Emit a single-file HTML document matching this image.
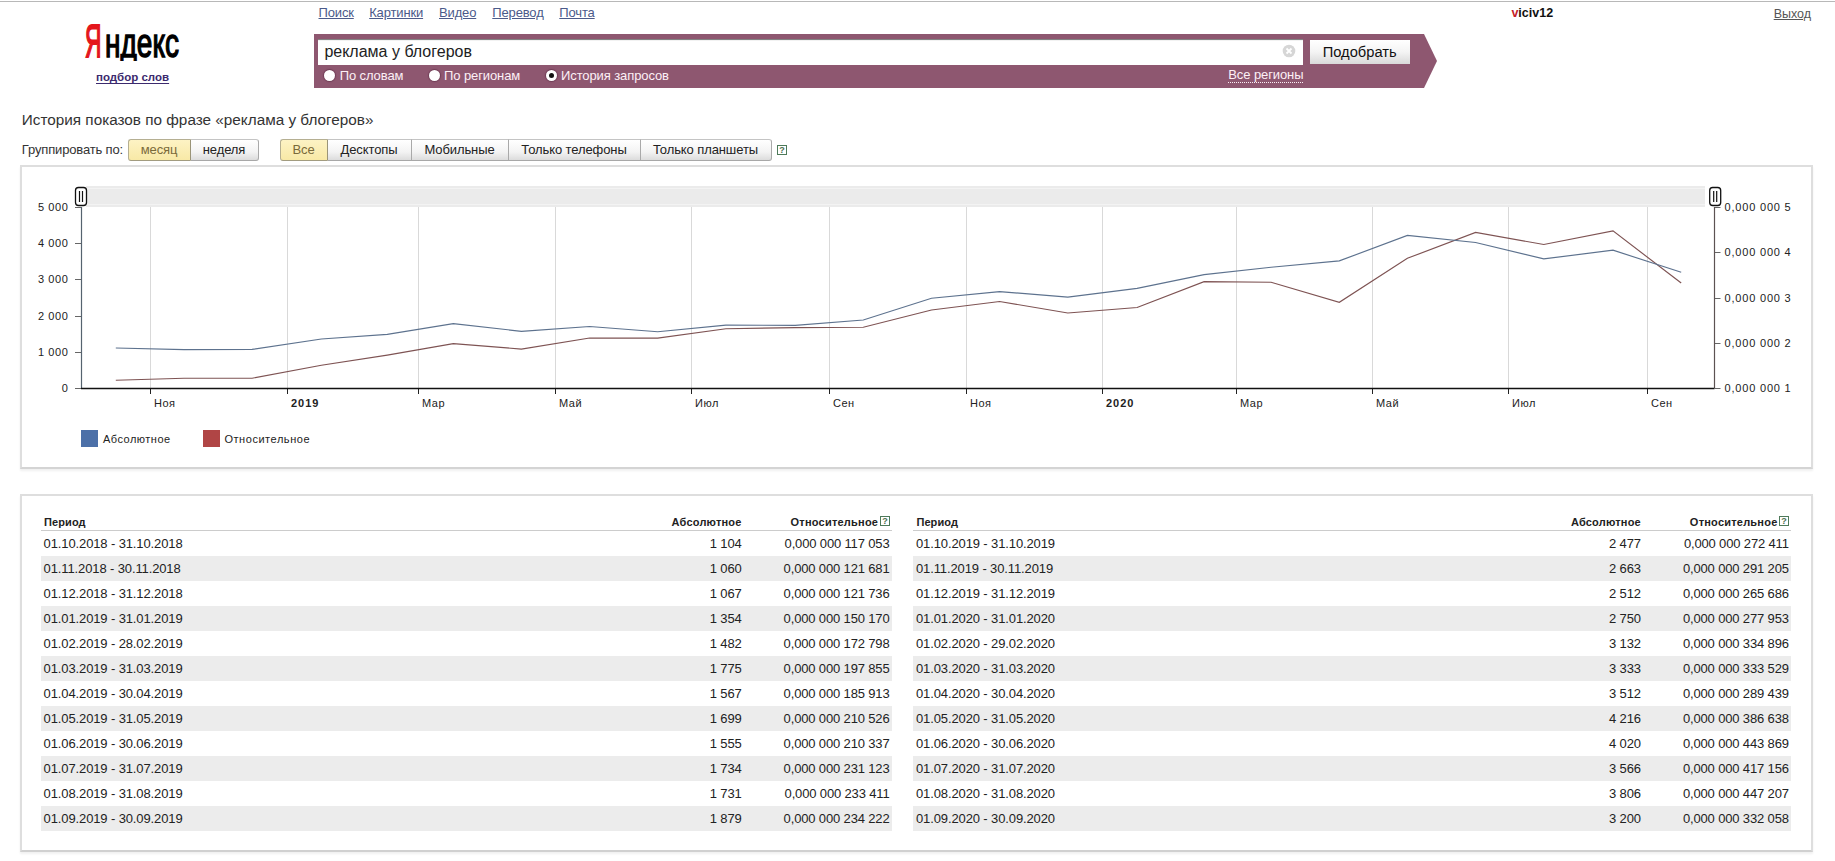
<!DOCTYPE html>
<html><head><meta charset="utf-8"><title>Wordstat</title>
<style>
html,body{margin:0;padding:0;background:#fff;width:1835px;height:861px;overflow:hidden;position:relative}
body{font-family:"Liberation Sans", sans-serif}
.t{position:absolute;white-space:nowrap;font-family:"Liberation Sans", sans-serif}
</style></head><body>
<div style="position:absolute;left:0;top:1px;width:1835px;height:1px;background:#b8b8b8"></div>
<svg style="position:absolute;left:0px;top:0px" width="200" height="70"><defs><clipPath id="lc"><rect x="0" y="0" width="200" height="61"/></clipPath></defs><text x="85" y="57" font-family="Liberation Sans" font-size="46" fill="#e4161c" stroke="#e4161c" stroke-width="1.9" textLength="16.5" lengthAdjust="spacingAndGlyphs">Я</text><text x="105" y="57" clip-path="url(#lc)" font-family="Liberation Sans" font-size="40" fill="#000" stroke="#000" stroke-width="1.4" textLength="74" lengthAdjust="spacingAndGlyphs">ндекс</text></svg>
<div class="t " style="left:96.00px;top:72.27px;font-size:11.5px;line-height:11.5px;color:#3c2a6e;font-weight:700;letter-spacing:0px;text-decoration:underline;text-underline-offset:2px;text-decoration-thickness:1.3px;">подбор слов</div>
<div class="t " style="left:318.50px;top:6.00px;font-size:13px;line-height:13px;color:#4b5a8a;font-weight:400;letter-spacing:-0.15px;text-decoration:underline;">Поиск</div>
<div class="t " style="left:369.20px;top:6.00px;font-size:13px;line-height:13px;color:#4b5a8a;font-weight:400;letter-spacing:-0.15px;text-decoration:underline;">Картинки</div>
<div class="t " style="left:439.00px;top:6.00px;font-size:13px;line-height:13px;color:#4b5a8a;font-weight:400;letter-spacing:-0.15px;text-decoration:underline;">Видео</div>
<div class="t " style="left:492.30px;top:6.00px;font-size:13px;line-height:13px;color:#4b5a8a;font-weight:400;letter-spacing:-0.15px;text-decoration:underline;">Перевод</div>
<div class="t " style="left:559.30px;top:6.00px;font-size:13px;line-height:13px;color:#4b5a8a;font-weight:400;letter-spacing:-0.15px;text-decoration:underline;">Почта</div>
<div class="t " style="left:1511.40px;top:6.62px;font-size:12.5px;line-height:12.5px;color:#111;font-weight:700;letter-spacing:0px;"><span style="color:#c4202a">v</span>iciv12</div>
<div class="t " style="left:1773.70px;top:7.62px;font-size:12.5px;line-height:12.5px;color:#555;font-weight:400;letter-spacing:0px;text-decoration:underline;">Выход</div>
<svg style="position:absolute;left:0;top:0" width="1835" height="100"><polygon points="314,34 1424,34 1437,61 1424,88 314,88" fill="#8e5770"/></svg>
<div style="position:absolute;left:318px;top:39px;width:985px;height:26px;background:#fff;box-shadow:inset 0 2px 1px -1px #777"></div>
<div class="t " style="left:324.40px;top:43.76px;font-size:16px;line-height:16px;color:#222;font-weight:400;letter-spacing:0px;">реклама у блогеров</div>
<svg style="position:absolute;left:1282px;top:44px" width="14" height="14"><circle cx="7" cy="7" r="6.3" fill="#d6d6d6"/><path d="M4.5 4.5 L9.5 9.5 M9.5 4.5 L4.5 9.5" stroke="#fff" stroke-width="1.8"/></svg>
<div style="position:absolute;left:1310px;top:40px;width:100px;height:24px;background:linear-gradient(#ffffff,#f4f4f4 50%,#d9d9d9);"></div>
<div class="t " style="left:1322.70px;top:44.96px;font-size:14.7px;line-height:14.7px;color:#111;font-weight:400;letter-spacing:0px;">Подобрать</div>
<div style="position:absolute;left:323.5px;top:69.5px;width:11px;height:11px;border-radius:50%;background:#fff;box-shadow:0 0 1px 1px rgba(90,40,65,0.55)"></div>
<div class="t " style="left:339.70px;top:68.50px;font-size:13px;line-height:13px;color:#fdf0f6;font-weight:400;letter-spacing:-0.1px;">По словам</div>
<div style="position:absolute;left:428.5px;top:69.5px;width:11px;height:11px;border-radius:50%;background:#fff;box-shadow:0 0 1px 1px rgba(90,40,65,0.55)"></div>
<div class="t " style="left:444.00px;top:68.50px;font-size:13px;line-height:13px;color:#fdf0f6;font-weight:400;letter-spacing:-0.1px;">По регионам</div>
<div style="position:absolute;left:545.5px;top:69.5px;width:11px;height:11px;border-radius:50%;background:#fff;box-shadow:0 0 1px 1px rgba(90,40,65,0.55)"></div>
<div style="position:absolute;left:548.5px;top:72.5px;width:5px;height:5px;border-radius:50%;background:#111"></div>
<div class="t " style="left:561.00px;top:68.50px;font-size:13px;line-height:13px;color:#fdf0f6;font-weight:400;letter-spacing:-0.1px;">История запросов</div>
<div class="t " style="left:1228.30px;top:67.60px;font-size:13px;line-height:13px;color:#fdf0f6;font-weight:400;letter-spacing:-0.1px;border-bottom:1px dotted #fdf0f6;line-height:14px;">Все регионы</div>
<div class="t " style="left:21.80px;top:111.95px;font-size:15.3px;line-height:15.3px;color:#333;font-weight:400;letter-spacing:0px;">История показов по фразе «реклама у блогеров»</div>
<div class="t " style="left:21.80px;top:142.60px;font-size:13px;line-height:13px;color:#333;font-weight:400;letter-spacing:-0.15px;">Группировать по:</div>
<div style="position:absolute;left:128px;top:139px;width:63px;height:22px;box-sizing:border-box;border:1px solid #b5af92;border-bottom-color:#a29c80;border-right-color:#9a9478;background:linear-gradient(#fdf3c4,#f8e9a6);border-radius:3px 0 0 3px;"></div>
<div class="t" style="left:128px;top:143.00px;width:62px;text-align:center;font-size:13px;line-height:13px;color:#7a6a3a;letter-spacing:-0.1px">месяц</div>
<div style="position:absolute;left:191px;top:139px;width:68px;height:22px;box-sizing:border-box;border:1px solid #c4c4c4;border-bottom-color:#a8a8a8;border-right-color:#a9a9a9;border-left:none;background:linear-gradient(#ffffff,#f3f3f3 60%,#dcdcdc);border-radius:0 3px 3px 0;"></div>
<div class="t" style="left:190px;top:143.00px;width:68px;text-align:center;font-size:13px;line-height:13px;color:#222;letter-spacing:-0.1px">неделя</div>
<div style="position:absolute;left:280px;top:139px;width:48px;height:22px;box-sizing:border-box;border:1px solid #b5af92;border-bottom-color:#a29c80;border-right-color:#9a9478;background:linear-gradient(#fdf3c4,#f8e9a6);border-radius:3px 0 0 3px;"></div>
<div class="t" style="left:280px;top:143.00px;width:47px;text-align:center;font-size:13px;line-height:13px;color:#7a6a3a;letter-spacing:-0.1px">Все</div>
<div style="position:absolute;left:328px;top:139px;width:84px;height:22px;box-sizing:border-box;border:1px solid #c4c4c4;border-bottom-color:#a8a8a8;border-right-color:#a9a9a9;border-left:none;background:linear-gradient(#ffffff,#f3f3f3 60%,#dcdcdc);"></div>
<div class="t" style="left:327px;top:143.00px;width:84px;text-align:center;font-size:13px;line-height:13px;color:#222;letter-spacing:-0.1px">Десктопы</div>
<div style="position:absolute;left:412px;top:139px;width:97px;height:22px;box-sizing:border-box;border:1px solid #c4c4c4;border-bottom-color:#a8a8a8;border-right-color:#a9a9a9;border-left:none;background:linear-gradient(#ffffff,#f3f3f3 60%,#dcdcdc);"></div>
<div class="t" style="left:411px;top:143.00px;width:97px;text-align:center;font-size:13px;line-height:13px;color:#222;letter-spacing:-0.1px">Мобильные</div>
<div style="position:absolute;left:509px;top:139px;width:132px;height:22px;box-sizing:border-box;border:1px solid #c4c4c4;border-bottom-color:#a8a8a8;border-right-color:#a9a9a9;border-left:none;background:linear-gradient(#ffffff,#f3f3f3 60%,#dcdcdc);"></div>
<div class="t" style="left:508px;top:143.00px;width:132px;text-align:center;font-size:13px;line-height:13px;color:#222;letter-spacing:-0.1px">Только телефоны</div>
<div style="position:absolute;left:641px;top:139px;width:131px;height:22px;box-sizing:border-box;border:1px solid #c4c4c4;border-bottom-color:#a8a8a8;border-right-color:#a9a9a9;border-left:none;background:linear-gradient(#ffffff,#f3f3f3 60%,#dcdcdc);border-radius:0 3px 3px 0;"></div>
<div class="t" style="left:640px;top:143.00px;width:131px;text-align:center;font-size:13px;line-height:13px;color:#222;letter-spacing:-0.1px">Только планшеты</div>
<svg style="position:absolute;left:777px;top:145px" width="10" height="10"><rect x="0.5" y="0.5" width="9" height="9" fill="#fff" stroke="#4e7a5a" stroke-width="1"/><text x="5" y="8.3" text-anchor="middle" font-family="Liberation Sans" font-weight="700" font-size="9" fill="#4e7050">?</text></svg>
<div style="position:absolute;left:20px;top:165px;width:1793px;height:304px;box-sizing:border-box;border:2px solid #dedede;border-bottom-color:#d4d4d4;box-shadow:0 2px 2px #f0f0f0"></div>
<svg style="position:absolute;left:0;top:0" width="1835" height="861" shape-rendering="auto">
<rect x="86" y="186" width="1619" height="21" fill="#ebebeb"/>
<rect x="86" y="188" width="1619" height="1" fill="#f3f3f3"/>
<rect x="86" y="204" width="1619" height="1" fill="#f3f3f3"/>
<line x1="150.5" y1="207" x2="150.5" y2="388" stroke="#d9d9d9" stroke-width="1"/>
<line x1="150.5" y1="388" x2="150.5" y2="394" stroke="#222" stroke-width="1"/>
<line x1="287.5" y1="207" x2="287.5" y2="388" stroke="#d9d9d9" stroke-width="1"/>
<line x1="287.5" y1="388" x2="287.5" y2="394" stroke="#222" stroke-width="1"/>
<line x1="418.5" y1="207" x2="418.5" y2="388" stroke="#d9d9d9" stroke-width="1"/>
<line x1="418.5" y1="388" x2="418.5" y2="394" stroke="#222" stroke-width="1"/>
<line x1="555.5" y1="207" x2="555.5" y2="388" stroke="#d9d9d9" stroke-width="1"/>
<line x1="555.5" y1="388" x2="555.5" y2="394" stroke="#222" stroke-width="1"/>
<line x1="691.5" y1="207" x2="691.5" y2="388" stroke="#d9d9d9" stroke-width="1"/>
<line x1="691.5" y1="388" x2="691.5" y2="394" stroke="#222" stroke-width="1"/>
<line x1="829.5" y1="207" x2="829.5" y2="388" stroke="#d9d9d9" stroke-width="1"/>
<line x1="829.5" y1="388" x2="829.5" y2="394" stroke="#222" stroke-width="1"/>
<line x1="966.5" y1="207" x2="966.5" y2="388" stroke="#d9d9d9" stroke-width="1"/>
<line x1="966.5" y1="388" x2="966.5" y2="394" stroke="#222" stroke-width="1"/>
<line x1="1102.5" y1="207" x2="1102.5" y2="388" stroke="#d9d9d9" stroke-width="1"/>
<line x1="1102.5" y1="388" x2="1102.5" y2="394" stroke="#222" stroke-width="1"/>
<line x1="1236.5" y1="207" x2="1236.5" y2="388" stroke="#d9d9d9" stroke-width="1"/>
<line x1="1236.5" y1="388" x2="1236.5" y2="394" stroke="#222" stroke-width="1"/>
<line x1="1372.5" y1="207" x2="1372.5" y2="388" stroke="#d9d9d9" stroke-width="1"/>
<line x1="1372.5" y1="388" x2="1372.5" y2="394" stroke="#222" stroke-width="1"/>
<line x1="1508.5" y1="207" x2="1508.5" y2="388" stroke="#d9d9d9" stroke-width="1"/>
<line x1="1508.5" y1="388" x2="1508.5" y2="394" stroke="#222" stroke-width="1"/>
<line x1="1647.5" y1="207" x2="1647.5" y2="388" stroke="#d9d9d9" stroke-width="1"/>
<line x1="1647.5" y1="388" x2="1647.5" y2="394" stroke="#222" stroke-width="1"/>
<line x1="75" y1="388.5" x2="81" y2="388.5" stroke="#666" stroke-width="1"/>
<line x1="75" y1="352.5" x2="81" y2="352.5" stroke="#666" stroke-width="1"/>
<line x1="75" y1="316.5" x2="81" y2="316.5" stroke="#666" stroke-width="1"/>
<line x1="75" y1="279.5" x2="81" y2="279.5" stroke="#666" stroke-width="1"/>
<line x1="75" y1="243.5" x2="81" y2="243.5" stroke="#666" stroke-width="1"/>
<line x1="75" y1="207.5" x2="81" y2="207.5" stroke="#666" stroke-width="1"/>
<line x1="1714.5" y1="388.5" x2="1720.5" y2="388.5" stroke="#666" stroke-width="1"/>
<line x1="1714.5" y1="343.5" x2="1720.5" y2="343.5" stroke="#666" stroke-width="1"/>
<line x1="1714.5" y1="298.5" x2="1720.5" y2="298.5" stroke="#666" stroke-width="1"/>
<line x1="1714.5" y1="252.5" x2="1720.5" y2="252.5" stroke="#666" stroke-width="1"/>
<line x1="1714.5" y1="207.5" x2="1720.5" y2="207.5" stroke="#666" stroke-width="1"/>
<line x1="81.5" y1="207" x2="81.5" y2="388" stroke="#56636f" stroke-width="1.2"/>
<line x1="1714.5" y1="207" x2="1714.5" y2="388" stroke="#5c5252" stroke-width="1.2"/>
<line x1="81" y1="388.5" x2="1714.5" y2="388.5" stroke="#111" stroke-width="1.6"/>
<polyline points="115.8,380.3 184.0,378.2 252.1,378.2 321.4,365.3 387.3,355.1 453.3,343.7 521.4,349.1 589.6,338.0 657.7,338.1 725.9,328.7 795.2,327.6 863.3,327.3 931.5,310.0 999.6,301.5 1067.8,313.0 1137.1,307.5 1204.1,281.7 1271.1,282.3 1339.3,302.3 1407.4,258.3 1475.6,232.4 1543.8,244.5 1613.0,230.9 1681.2,283.0" fill="none" stroke="#7e5353" stroke-width="1.15"/>
<polyline points="115.8,348.0 184.0,349.6 252.1,349.4 321.4,339.0 387.3,334.4 453.3,323.7 521.4,331.3 589.6,326.5 657.7,331.7 725.9,325.2 795.2,325.3 863.3,320.0 931.5,298.3 999.6,291.6 1067.8,297.1 1137.1,288.4 1204.1,274.6 1271.1,267.3 1339.3,260.9 1407.4,235.4 1475.6,242.5 1543.8,258.9 1613.0,250.2 1681.2,272.2" fill="none" stroke="#5d728e" stroke-width="1.15"/>
<rect x="75.5" y="187.5" width="11" height="18" rx="3" fill="#fff" stroke="#111" stroke-width="1.3"/>
<line x1="79.5" y1="191" x2="79.5" y2="202" stroke="#111" stroke-width="1.2"/>
<line x1="82.5" y1="191" x2="82.5" y2="202" stroke="#111" stroke-width="1.2"/>
<rect x="1709.7" y="187.5" width="11" height="18" rx="3" fill="#fff" stroke="#111" stroke-width="1.3"/>
<line x1="1713.7" y1="191" x2="1713.7" y2="202" stroke="#111" stroke-width="1.2"/>
<line x1="1716.7" y1="191" x2="1716.7" y2="202" stroke="#111" stroke-width="1.2"/>
<rect x="81" y="430" width="17" height="17" fill="#4c70a8"/>
<rect x="203" y="430" width="17" height="17" fill="#b04545"/>
</svg>
<div class="t " style="left:154.00px;top:397.69px;font-size:11px;line-height:11px;color:#222;font-weight:400;letter-spacing:0.5px;">Ноя</div>
<div class="t " style="left:291.00px;top:397.69px;font-size:11px;line-height:11px;color:#222;font-weight:700;letter-spacing:1.0px;">2019</div>
<div class="t " style="left:422.00px;top:397.69px;font-size:11px;line-height:11px;color:#222;font-weight:400;letter-spacing:0.5px;">Мар</div>
<div class="t " style="left:559.00px;top:397.69px;font-size:11px;line-height:11px;color:#222;font-weight:400;letter-spacing:0.5px;">Май</div>
<div class="t " style="left:695.00px;top:397.69px;font-size:11px;line-height:11px;color:#222;font-weight:400;letter-spacing:0.5px;">Июл</div>
<div class="t " style="left:833.00px;top:397.69px;font-size:11px;line-height:11px;color:#222;font-weight:400;letter-spacing:0.5px;">Сен</div>
<div class="t " style="left:970.00px;top:397.69px;font-size:11px;line-height:11px;color:#222;font-weight:400;letter-spacing:0.5px;">Ноя</div>
<div class="t " style="left:1106.00px;top:397.69px;font-size:11px;line-height:11px;color:#222;font-weight:700;letter-spacing:1.0px;">2020</div>
<div class="t " style="left:1240.00px;top:397.69px;font-size:11px;line-height:11px;color:#222;font-weight:400;letter-spacing:0.5px;">Мар</div>
<div class="t " style="left:1376.00px;top:397.69px;font-size:11px;line-height:11px;color:#222;font-weight:400;letter-spacing:0.5px;">Май</div>
<div class="t " style="left:1512.00px;top:397.69px;font-size:11px;line-height:11px;color:#222;font-weight:400;letter-spacing:0.5px;">Июл</div>
<div class="t " style="left:1651.00px;top:397.69px;font-size:11px;line-height:11px;color:#222;font-weight:400;letter-spacing:0.5px;">Сен</div>
<div class="t " style="right:1766.70px;top:382.69px;font-size:11px;line-height:11px;color:#222;font-weight:400;letter-spacing:0.55px;">0</div>
<div class="t " style="right:1766.70px;top:346.69px;font-size:11px;line-height:11px;color:#222;font-weight:400;letter-spacing:0.55px;">1 000</div>
<div class="t " style="right:1766.70px;top:310.69px;font-size:11px;line-height:11px;color:#222;font-weight:400;letter-spacing:0.55px;">2 000</div>
<div class="t " style="right:1766.70px;top:273.69px;font-size:11px;line-height:11px;color:#222;font-weight:400;letter-spacing:0.55px;">3 000</div>
<div class="t " style="right:1766.70px;top:237.69px;font-size:11px;line-height:11px;color:#222;font-weight:400;letter-spacing:0.55px;">4 000</div>
<div class="t " style="right:1766.70px;top:201.69px;font-size:11px;line-height:11px;color:#222;font-weight:400;letter-spacing:0.55px;">5 000</div>
<div class="t " style="left:1724.60px;top:382.69px;font-size:11px;line-height:11px;color:#222;font-weight:400;letter-spacing:0.8px;">0,000 000 1</div>
<div class="t " style="left:1724.60px;top:337.69px;font-size:11px;line-height:11px;color:#222;font-weight:400;letter-spacing:0.8px;">0,000 000 2</div>
<div class="t " style="left:1724.60px;top:292.69px;font-size:11px;line-height:11px;color:#222;font-weight:400;letter-spacing:0.8px;">0,000 000 3</div>
<div class="t " style="left:1724.60px;top:246.69px;font-size:11px;line-height:11px;color:#222;font-weight:400;letter-spacing:0.8px;">0,000 000 4</div>
<div class="t " style="left:1724.60px;top:201.69px;font-size:11px;line-height:11px;color:#222;font-weight:400;letter-spacing:0.8px;">0,000 000 5</div>
<div class="t " style="left:102.90px;top:434.09px;font-size:11px;line-height:11px;color:#222;font-weight:400;letter-spacing:0.5px;">Абсолютное</div>
<div class="t " style="left:224.40px;top:434.09px;font-size:11px;line-height:11px;color:#222;font-weight:400;letter-spacing:0.55px;">Относительное</div>
<div style="position:absolute;left:20px;top:494px;width:1793px;height:358px;box-sizing:border-box;border:2px solid #dedede;border-bottom-color:#d0d0d0;box-shadow:0 2px 2px #f0f0f0"></div>
<div class="t " style="left:44.00px;top:516.69px;font-size:11px;line-height:11px;color:#222;font-weight:700;letter-spacing:0.1px;">Период</div>
<div class="t " style="right:1093.40px;top:516.69px;font-size:11px;line-height:11px;color:#222;font-weight:700;letter-spacing:0.2px;">Абсолютное</div>
<div class="t " style="right:956.80px;top:516.69px;font-size:11px;line-height:11px;color:#222;font-weight:700;letter-spacing:0.22px;">Относительное</div>
<svg style="position:absolute;left:880.0px;top:516px" width="10" height="10"><rect x="0.5" y="0.5" width="9" height="9" fill="#fff" stroke="#4e7a5a" stroke-width="1"/><text x="5" y="8.3" text-anchor="middle" font-family="Liberation Sans" font-weight="700" font-size="9" fill="#4e7050">?</text></svg>
<div style="position:absolute;left:40.6px;top:530px;width:851.4px;height:1px;background:#cccccc"></div>
<div class="t " style="left:43.60px;top:537.00px;font-size:13px;line-height:13px;color:#222;font-weight:400;letter-spacing:-0.12px;">01.10.2018 - 31.10.2018</div>
<div class="t " style="right:1093.40px;top:537.00px;font-size:13px;line-height:13px;color:#222;font-weight:400;letter-spacing:-0.12px;">1 104</div>
<div class="t " style="right:945.50px;top:537.00px;font-size:13px;line-height:13px;color:#222;font-weight:400;letter-spacing:-0.15px;">0,000 000 117 053</div>
<div style="position:absolute;left:40.6px;top:556px;width:851.4px;height:25px;background:#ececec"></div>
<div class="t " style="left:43.60px;top:562.00px;font-size:13px;line-height:13px;color:#222;font-weight:400;letter-spacing:-0.12px;">01.11.2018 - 30.11.2018</div>
<div class="t " style="right:1093.40px;top:562.00px;font-size:13px;line-height:13px;color:#222;font-weight:400;letter-spacing:-0.12px;">1 060</div>
<div class="t " style="right:945.50px;top:562.00px;font-size:13px;line-height:13px;color:#222;font-weight:400;letter-spacing:-0.15px;">0,000 000 121 681</div>
<div class="t " style="left:43.60px;top:587.00px;font-size:13px;line-height:13px;color:#222;font-weight:400;letter-spacing:-0.12px;">01.12.2018 - 31.12.2018</div>
<div class="t " style="right:1093.40px;top:587.00px;font-size:13px;line-height:13px;color:#222;font-weight:400;letter-spacing:-0.12px;">1 067</div>
<div class="t " style="right:945.50px;top:587.00px;font-size:13px;line-height:13px;color:#222;font-weight:400;letter-spacing:-0.15px;">0,000 000 121 736</div>
<div style="position:absolute;left:40.6px;top:606px;width:851.4px;height:25px;background:#ececec"></div>
<div class="t " style="left:43.60px;top:612.00px;font-size:13px;line-height:13px;color:#222;font-weight:400;letter-spacing:-0.12px;">01.01.2019 - 31.01.2019</div>
<div class="t " style="right:1093.40px;top:612.00px;font-size:13px;line-height:13px;color:#222;font-weight:400;letter-spacing:-0.12px;">1 354</div>
<div class="t " style="right:945.50px;top:612.00px;font-size:13px;line-height:13px;color:#222;font-weight:400;letter-spacing:-0.15px;">0,000 000 150 170</div>
<div class="t " style="left:43.60px;top:637.00px;font-size:13px;line-height:13px;color:#222;font-weight:400;letter-spacing:-0.12px;">01.02.2019 - 28.02.2019</div>
<div class="t " style="right:1093.40px;top:637.00px;font-size:13px;line-height:13px;color:#222;font-weight:400;letter-spacing:-0.12px;">1 482</div>
<div class="t " style="right:945.50px;top:637.00px;font-size:13px;line-height:13px;color:#222;font-weight:400;letter-spacing:-0.15px;">0,000 000 172 798</div>
<div style="position:absolute;left:40.6px;top:656px;width:851.4px;height:25px;background:#ececec"></div>
<div class="t " style="left:43.60px;top:662.00px;font-size:13px;line-height:13px;color:#222;font-weight:400;letter-spacing:-0.12px;">01.03.2019 - 31.03.2019</div>
<div class="t " style="right:1093.40px;top:662.00px;font-size:13px;line-height:13px;color:#222;font-weight:400;letter-spacing:-0.12px;">1 775</div>
<div class="t " style="right:945.50px;top:662.00px;font-size:13px;line-height:13px;color:#222;font-weight:400;letter-spacing:-0.15px;">0,000 000 197 855</div>
<div class="t " style="left:43.60px;top:687.00px;font-size:13px;line-height:13px;color:#222;font-weight:400;letter-spacing:-0.12px;">01.04.2019 - 30.04.2019</div>
<div class="t " style="right:1093.40px;top:687.00px;font-size:13px;line-height:13px;color:#222;font-weight:400;letter-spacing:-0.12px;">1 567</div>
<div class="t " style="right:945.50px;top:687.00px;font-size:13px;line-height:13px;color:#222;font-weight:400;letter-spacing:-0.15px;">0,000 000 185 913</div>
<div style="position:absolute;left:40.6px;top:706px;width:851.4px;height:25px;background:#ececec"></div>
<div class="t " style="left:43.60px;top:712.00px;font-size:13px;line-height:13px;color:#222;font-weight:400;letter-spacing:-0.12px;">01.05.2019 - 31.05.2019</div>
<div class="t " style="right:1093.40px;top:712.00px;font-size:13px;line-height:13px;color:#222;font-weight:400;letter-spacing:-0.12px;">1 699</div>
<div class="t " style="right:945.50px;top:712.00px;font-size:13px;line-height:13px;color:#222;font-weight:400;letter-spacing:-0.15px;">0,000 000 210 526</div>
<div class="t " style="left:43.60px;top:737.00px;font-size:13px;line-height:13px;color:#222;font-weight:400;letter-spacing:-0.12px;">01.06.2019 - 30.06.2019</div>
<div class="t " style="right:1093.40px;top:737.00px;font-size:13px;line-height:13px;color:#222;font-weight:400;letter-spacing:-0.12px;">1 555</div>
<div class="t " style="right:945.50px;top:737.00px;font-size:13px;line-height:13px;color:#222;font-weight:400;letter-spacing:-0.15px;">0,000 000 210 337</div>
<div style="position:absolute;left:40.6px;top:756px;width:851.4px;height:25px;background:#ececec"></div>
<div class="t " style="left:43.60px;top:762.00px;font-size:13px;line-height:13px;color:#222;font-weight:400;letter-spacing:-0.12px;">01.07.2019 - 31.07.2019</div>
<div class="t " style="right:1093.40px;top:762.00px;font-size:13px;line-height:13px;color:#222;font-weight:400;letter-spacing:-0.12px;">1 734</div>
<div class="t " style="right:945.50px;top:762.00px;font-size:13px;line-height:13px;color:#222;font-weight:400;letter-spacing:-0.15px;">0,000 000 231 123</div>
<div class="t " style="left:43.60px;top:787.00px;font-size:13px;line-height:13px;color:#222;font-weight:400;letter-spacing:-0.12px;">01.08.2019 - 31.08.2019</div>
<div class="t " style="right:1093.40px;top:787.00px;font-size:13px;line-height:13px;color:#222;font-weight:400;letter-spacing:-0.12px;">1 731</div>
<div class="t " style="right:945.50px;top:787.00px;font-size:13px;line-height:13px;color:#222;font-weight:400;letter-spacing:-0.15px;">0,000 000 233 411</div>
<div style="position:absolute;left:40.6px;top:806px;width:851.4px;height:25px;background:#ececec"></div>
<div class="t " style="left:43.60px;top:812.00px;font-size:13px;line-height:13px;color:#222;font-weight:400;letter-spacing:-0.12px;">01.09.2019 - 30.09.2019</div>
<div class="t " style="right:1093.40px;top:812.00px;font-size:13px;line-height:13px;color:#222;font-weight:400;letter-spacing:-0.12px;">1 879</div>
<div class="t " style="right:945.50px;top:812.00px;font-size:13px;line-height:13px;color:#222;font-weight:400;letter-spacing:-0.15px;">0,000 000 234 222</div>
<div class="t " style="left:916.40px;top:516.69px;font-size:11px;line-height:11px;color:#222;font-weight:700;letter-spacing:0.1px;">Период</div>
<div class="t " style="right:194.10px;top:516.69px;font-size:11px;line-height:11px;color:#222;font-weight:700;letter-spacing:0.2px;">Абсолютное</div>
<div class="t " style="right:57.50px;top:516.69px;font-size:11px;line-height:11px;color:#222;font-weight:700;letter-spacing:0.22px;">Относительное</div>
<svg style="position:absolute;left:1779.3px;top:516px" width="10" height="10"><rect x="0.5" y="0.5" width="9" height="9" fill="#fff" stroke="#4e7a5a" stroke-width="1"/><text x="5" y="8.3" text-anchor="middle" font-family="Liberation Sans" font-weight="700" font-size="9" fill="#4e7050">?</text></svg>
<div style="position:absolute;left:913px;top:530px;width:878.3px;height:1px;background:#cccccc"></div>
<div class="t " style="left:916.00px;top:537.00px;font-size:13px;line-height:13px;color:#222;font-weight:400;letter-spacing:-0.12px;">01.10.2019 - 31.10.2019</div>
<div class="t " style="right:194.10px;top:537.00px;font-size:13px;line-height:13px;color:#222;font-weight:400;letter-spacing:-0.12px;">2 477</div>
<div class="t " style="right:46.20px;top:537.00px;font-size:13px;line-height:13px;color:#222;font-weight:400;letter-spacing:-0.15px;">0,000 000 272 411</div>
<div style="position:absolute;left:913px;top:556px;width:878.3px;height:25px;background:#ececec"></div>
<div class="t " style="left:916.00px;top:562.00px;font-size:13px;line-height:13px;color:#222;font-weight:400;letter-spacing:-0.12px;">01.11.2019 - 30.11.2019</div>
<div class="t " style="right:194.10px;top:562.00px;font-size:13px;line-height:13px;color:#222;font-weight:400;letter-spacing:-0.12px;">2 663</div>
<div class="t " style="right:46.20px;top:562.00px;font-size:13px;line-height:13px;color:#222;font-weight:400;letter-spacing:-0.15px;">0,000 000 291 205</div>
<div class="t " style="left:916.00px;top:587.00px;font-size:13px;line-height:13px;color:#222;font-weight:400;letter-spacing:-0.12px;">01.12.2019 - 31.12.2019</div>
<div class="t " style="right:194.10px;top:587.00px;font-size:13px;line-height:13px;color:#222;font-weight:400;letter-spacing:-0.12px;">2 512</div>
<div class="t " style="right:46.20px;top:587.00px;font-size:13px;line-height:13px;color:#222;font-weight:400;letter-spacing:-0.15px;">0,000 000 265 686</div>
<div style="position:absolute;left:913px;top:606px;width:878.3px;height:25px;background:#ececec"></div>
<div class="t " style="left:916.00px;top:612.00px;font-size:13px;line-height:13px;color:#222;font-weight:400;letter-spacing:-0.12px;">01.01.2020 - 31.01.2020</div>
<div class="t " style="right:194.10px;top:612.00px;font-size:13px;line-height:13px;color:#222;font-weight:400;letter-spacing:-0.12px;">2 750</div>
<div class="t " style="right:46.20px;top:612.00px;font-size:13px;line-height:13px;color:#222;font-weight:400;letter-spacing:-0.15px;">0,000 000 277 953</div>
<div class="t " style="left:916.00px;top:637.00px;font-size:13px;line-height:13px;color:#222;font-weight:400;letter-spacing:-0.12px;">01.02.2020 - 29.02.2020</div>
<div class="t " style="right:194.10px;top:637.00px;font-size:13px;line-height:13px;color:#222;font-weight:400;letter-spacing:-0.12px;">3 132</div>
<div class="t " style="right:46.20px;top:637.00px;font-size:13px;line-height:13px;color:#222;font-weight:400;letter-spacing:-0.15px;">0,000 000 334 896</div>
<div style="position:absolute;left:913px;top:656px;width:878.3px;height:25px;background:#ececec"></div>
<div class="t " style="left:916.00px;top:662.00px;font-size:13px;line-height:13px;color:#222;font-weight:400;letter-spacing:-0.12px;">01.03.2020 - 31.03.2020</div>
<div class="t " style="right:194.10px;top:662.00px;font-size:13px;line-height:13px;color:#222;font-weight:400;letter-spacing:-0.12px;">3 333</div>
<div class="t " style="right:46.20px;top:662.00px;font-size:13px;line-height:13px;color:#222;font-weight:400;letter-spacing:-0.15px;">0,000 000 333 529</div>
<div class="t " style="left:916.00px;top:687.00px;font-size:13px;line-height:13px;color:#222;font-weight:400;letter-spacing:-0.12px;">01.04.2020 - 30.04.2020</div>
<div class="t " style="right:194.10px;top:687.00px;font-size:13px;line-height:13px;color:#222;font-weight:400;letter-spacing:-0.12px;">3 512</div>
<div class="t " style="right:46.20px;top:687.00px;font-size:13px;line-height:13px;color:#222;font-weight:400;letter-spacing:-0.15px;">0,000 000 289 439</div>
<div style="position:absolute;left:913px;top:706px;width:878.3px;height:25px;background:#ececec"></div>
<div class="t " style="left:916.00px;top:712.00px;font-size:13px;line-height:13px;color:#222;font-weight:400;letter-spacing:-0.12px;">01.05.2020 - 31.05.2020</div>
<div class="t " style="right:194.10px;top:712.00px;font-size:13px;line-height:13px;color:#222;font-weight:400;letter-spacing:-0.12px;">4 216</div>
<div class="t " style="right:46.20px;top:712.00px;font-size:13px;line-height:13px;color:#222;font-weight:400;letter-spacing:-0.15px;">0,000 000 386 638</div>
<div class="t " style="left:916.00px;top:737.00px;font-size:13px;line-height:13px;color:#222;font-weight:400;letter-spacing:-0.12px;">01.06.2020 - 30.06.2020</div>
<div class="t " style="right:194.10px;top:737.00px;font-size:13px;line-height:13px;color:#222;font-weight:400;letter-spacing:-0.12px;">4 020</div>
<div class="t " style="right:46.20px;top:737.00px;font-size:13px;line-height:13px;color:#222;font-weight:400;letter-spacing:-0.15px;">0,000 000 443 869</div>
<div style="position:absolute;left:913px;top:756px;width:878.3px;height:25px;background:#ececec"></div>
<div class="t " style="left:916.00px;top:762.00px;font-size:13px;line-height:13px;color:#222;font-weight:400;letter-spacing:-0.12px;">01.07.2020 - 31.07.2020</div>
<div class="t " style="right:194.10px;top:762.00px;font-size:13px;line-height:13px;color:#222;font-weight:400;letter-spacing:-0.12px;">3 566</div>
<div class="t " style="right:46.20px;top:762.00px;font-size:13px;line-height:13px;color:#222;font-weight:400;letter-spacing:-0.15px;">0,000 000 417 156</div>
<div class="t " style="left:916.00px;top:787.00px;font-size:13px;line-height:13px;color:#222;font-weight:400;letter-spacing:-0.12px;">01.08.2020 - 31.08.2020</div>
<div class="t " style="right:194.10px;top:787.00px;font-size:13px;line-height:13px;color:#222;font-weight:400;letter-spacing:-0.12px;">3 806</div>
<div class="t " style="right:46.20px;top:787.00px;font-size:13px;line-height:13px;color:#222;font-weight:400;letter-spacing:-0.15px;">0,000 000 447 207</div>
<div style="position:absolute;left:913px;top:806px;width:878.3px;height:25px;background:#ececec"></div>
<div class="t " style="left:916.00px;top:812.00px;font-size:13px;line-height:13px;color:#222;font-weight:400;letter-spacing:-0.12px;">01.09.2020 - 30.09.2020</div>
<div class="t " style="right:194.10px;top:812.00px;font-size:13px;line-height:13px;color:#222;font-weight:400;letter-spacing:-0.12px;">3 200</div>
<div class="t " style="right:46.20px;top:812.00px;font-size:13px;line-height:13px;color:#222;font-weight:400;letter-spacing:-0.15px;">0,000 000 332 058</div>
</body></html>
